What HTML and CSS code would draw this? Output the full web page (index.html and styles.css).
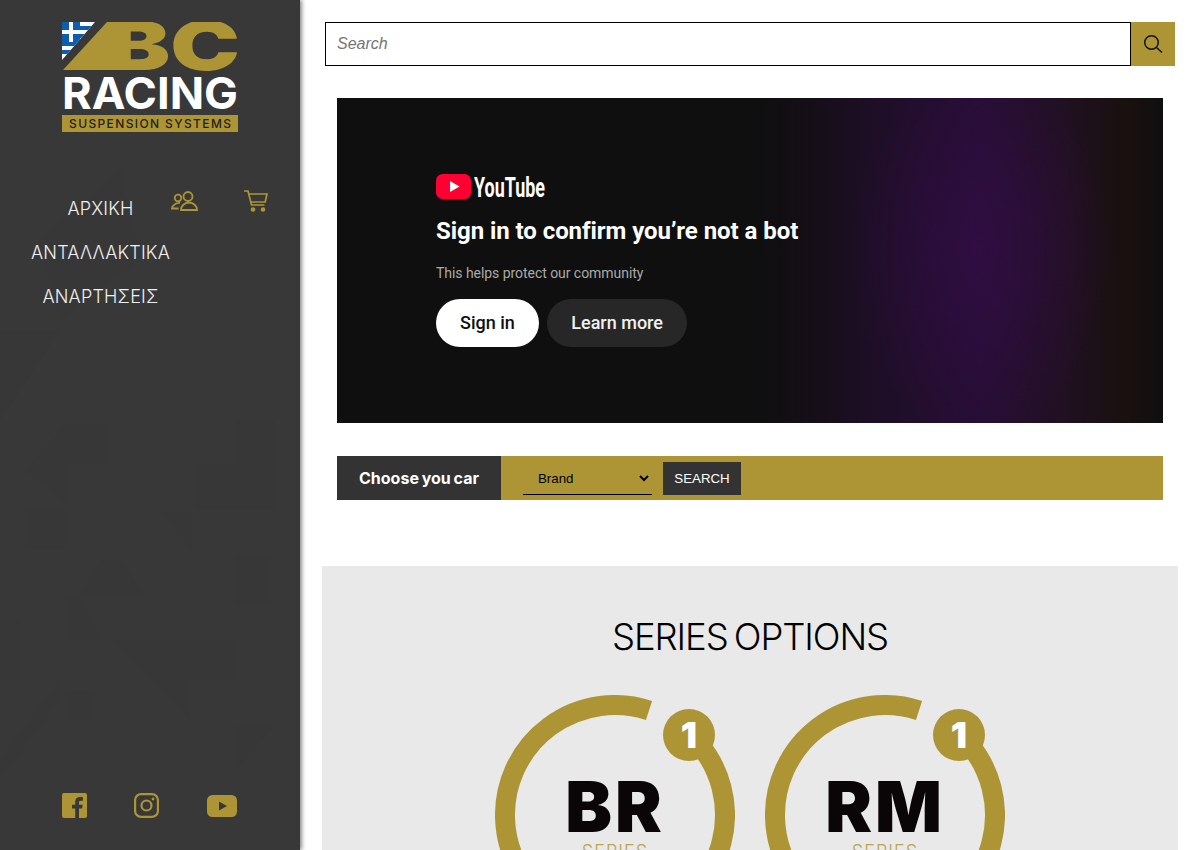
FILE: index.html
```html
<!DOCTYPE html>
<html lang="en">
<head>
  <meta charset="UTF-8">
  <title>BC Racing Greece</title>
  <link rel="stylesheet" href="styles.css">
</head>
<body>
  <aside class="sidebar">
    <svg class="sidebar-pattern" width="300" height="850" viewBox="0 0 300 850">
      <g class="tri">
        <polygon points="0,330 60,330 30,375 0,420"/>
        <polygon points="25,470 65,425 65,505"/>
        <polygon points="65,425 110,425 110,465 65,465"/>
        <polygon points="25,510 65,510 65,550 25,550"/>
        <polygon points="195,465 235,465 235,420 275,420 275,510 195,510"/>
        <polygon points="160,512 192,512 192,550"/>
        <polygon points="100,560 120,560 145,595 80,595"/>
        <polygon points="65,595 80,595 100,640 65,640"/>
        <polygon points="110,640 190,640 190,720"/>
        <polygon points="190,640 235,640 235,680 190,680"/>
        <polygon points="0,620 20,620 20,680 0,680"/>
        <polygon points="0,760 60,680 60,700 0,780"/>
        <polygon points="65,690 95,690 95,720 65,720"/>
        <polygon points="235,555 270,555 270,605 235,605"/>
        <polygon points="235,725 275,725 235,770"/>
        <polygon points="40,240 120,170 140,260 60,320"/>
      </g>
    </svg>

    <svg class="logo" width="176" height="110" viewBox="0 0 176 110">
      <defs>
        <clipPath id="flagClip"><polygon points="0,0 33,0 0,38"/></clipPath>
      </defs>
      <g clip-path="url(#flagClip)">
        <rect width="36" height="40" fill="#fff"/>
        <rect width="36" height="4" y="4" fill="#0d5eaf"/>
        <rect width="36" height="4" y="12" fill="#0d5eaf"/>
        <rect width="36" height="4" y="20" fill="#0d5eaf"/>
        <rect width="36" height="4" y="28" fill="#0d5eaf"/>
        <rect width="18" height="20" fill="#0d5eaf"/>
        <rect x="7" width="4" height="20" fill="#fff"/>
        <rect y="8" width="18" height="4" fill="#fff"/>
      </g>
      <polygon points="45,0 62,0 62,48 1,48" fill="#ad9535"/>
      <text class="logo-bc" x="46" y="48" textLength="132" lengthAdjust="spacingAndGlyphs">BC</text>
      <text class="logo-racing" x="0" y="87" textLength="176" lengthAdjust="spacingAndGlyphs">RACING</text>
      <rect y="93" width="176" height="17" fill="#ad9535"/>
      <text class="logo-sub" x="7" y="106" textLength="162">SUSPENSION SYSTEMS</text>
    </svg>

    <div class="side-menu">
      <ul class="nav">
        <li>ΑΡΧΙΚΗ</li>
        <li>ΑΝΤΑΛΛΑΚΤΙΚΑ</li>
        <li>ΑΝΑΡΤΗΣΕΙΣ</li>
      </ul>
      <div class="nav-icons">
        <svg width="27" height="22" viewBox="0 0 27 22" fill="none" stroke="#ad9535" stroke-width="1.8">
          <circle cx="7" cy="8" r="3.3"/>
          <circle cx="17" cy="6.5" r="4.5"/>
          <path d="M10 20h16c0-4-3.500-7.500-8-7.500s-8 3.500-8 7.500z"/>
          <path d="M9 13c-3.500-.3-7.500 2-8 5.500h6.500"/>
        </svg>
        <svg width="24" height="22" viewBox="0 0 24 22" fill="none" stroke="#ad9535" stroke-width="1.7">
          <path d="M0 1h4l3.500 14h13"/>
          <path d="M4.500 4h18.500l-1.800 8H6.500"/>
          <circle cx="9" cy="19.500" r="1.500" fill="#ad9535"/>
          <circle cx="19" cy="19.500" r="1.500" fill="#ad9535"/>
        </svg>
      </div>
    </div>

    <div class="social">
      <svg width="25" height="25" viewBox="0 0 25 25">
        <path fill="#ad9535" d="M2 0h21a2 2 0 0 1 2 2v21a2 2 0 0 1-2 2h-6v-9.500h3.200l.5-3.800H17V9.500c0-1.100.4-1.800 1.900-1.800h2V4.300c-.4 0-1.500-.2-2.800-.2-2.900 0-4.900 1.800-4.900 5v2.600H10v3.800h3.200V25H2a2 2 0 0 1-2-2V2a2 2 0 0 1 2-2z"/>
      </svg>
      <svg width="25" height="25" viewBox="0 0 25 25" fill="none" stroke="#ad9535" stroke-width="2.200">
        <rect x="1.100" y="1.100" width="22.800" height="22.800" rx="6"/>
        <circle cx="12.500" cy="12.500" r="5"/>
        <circle cx="19" cy="6" r="1.400" fill="#ad9535" stroke="none"/>
      </svg>
      <svg width="30" height="22" viewBox="0 0 30 22">
        <rect width="30" height="22" rx="5.500" fill="#ad9535"/>
        <polygon points="12,6.500 20,11 12,15.500" fill="#383838"/>
      </svg>
    </div>
  </aside>

  <main class="content">
    <form class="search-row">
      <input class="search-input" type="text" placeholder="Search">
      <button class="search-btn" type="button" aria-label="Search">
        <svg width="20" height="20" viewBox="0 0 20 20" fill="none" stroke="#111" stroke-width="1.500">
          <circle cx="8.500" cy="8.500" r="6.800"/>
          <path d="M13.500 13.500l5.500 5"/>
        </svg>
      </button>
    </form>

    <section class="video">
      <div class="yt-logo">
        <svg width="35" height="25" viewBox="0 0 35 25">
          <rect width="35" height="25" rx="6.500" fill="#ff0033"/>
          <polygon points="14,7 23.500,12.500 14,18" fill="#fff"/>
        </svg>
        <svg width="72" height="27" viewBox="0 0 72 27">
          <text class="yt-word" x="0" y="24" textLength="71" lengthAdjust="spacingAndGlyphs">YouTube</text>
        </svg>
      </div>
      <h2>Sign in to confirm you’re not a bot</h2>
      <p>This helps protect our community</p>
      <div class="yt-buttons">
        <span class="yt-btn yt-btn-light">Sign in</span>
        <span class="yt-btn yt-btn-dark">Learn more</span>
      </div>
    </section>

    <form class="car-bar">
      <div class="car-label">Choose you car</div>
      <select class="car-select">
        <option>Brand</option>
      </select>
      <button class="car-search" type="button">SEARCH</button>
    </form>

    <section class="series">
      <h2>SERIES OPTIONS</h2>
      <div class="series-list">
        <div class="badge">
          <svg width="240" height="240" viewBox="0 0 240 240">
            <path d="M154 15.400A110 110 0 1 0 204 49" fill="none" stroke="#ad9535" stroke-width="20"/>
            <circle cx="194" cy="40" r="26" fill="#ad9535"/>
            <text class="badge-num" x="194" y="53" text-anchor="middle">1</text>
            <text class="badge-name" x="120" y="137" text-anchor="middle">BR</text>
            <text class="badge-sub" x="120" y="163" text-anchor="middle">SERIES</text>
          </svg>
        </div>
        <div class="badge">
          <svg width="240" height="240" viewBox="0 0 240 240">
            <path d="M154 15.400A110 110 0 1 0 204 49" fill="none" stroke="#ad9535" stroke-width="20"/>
            <circle cx="194" cy="40" r="26" fill="#ad9535"/>
            <text class="badge-num" x="194" y="53" text-anchor="middle">1</text>
            <text class="badge-name" x="120" y="137" text-anchor="middle">RM</text>
            <text class="badge-sub" x="120" y="163" text-anchor="middle">SERIES</text>
          </svg>
        </div>
      </div>
    </section>
  </main>
</body>
</html>
```

FILE: styles.css
```css
html, body {
  height: 850px;
  overflow: hidden;
}
body {
  margin: 0;
  display: flex;
  background: #fff;
  font-family: "Liberation Sans", Arial, sans-serif;
}

/* sidebar */
.sidebar {
  position: relative;
  box-sizing: border-box;
  flex: 0 0 300px;
  height: 850px;
  display: flex;
  flex-direction: column;
  background: #383838;
  box-shadow: 2px 0 4px rgba(0,0,0,0.45);
  z-index: 2;
}
.sidebar-pattern {
  position: absolute;
  top: 0;
  left: 0;
}
.tri polygon {
  fill: #303030;
  opacity: 0.16;
}
.logo {
  position: relative;
  margin: 22px 0 0 62px;
}
.logo-bc {
  font-family: Inter, sans-serif;
  font-weight: 900;
  font-size: 68px;
  fill: #ad9535;
}
.logo-racing {
  font-family: Inter, sans-serif;
  font-weight: 700;
  font-size: 44px;
  fill: #fff;
}
.logo-sub {
  font-family: Inter, sans-serif;
  font-weight: 500;
  font-size: 12px;
  fill: #222;
}
.side-menu {
  position: relative;
  display: flex;
  align-items: flex-start;
  margin: 55px 0 0 31px;
}
.nav {
  list-style: none;
  margin: 0;
  padding: 0;
  width: 139px;
  color: #f0f0f0;
  font-family: Inter, sans-serif;
  font-weight: 300;
  font-size: 18px;
  letter-spacing: 0.2px;
  text-align: center;
  white-space: nowrap;
}
.nav li {
  height: 44px;
  line-height: 44px;
}
.nav-icons {
  display: flex;
  gap: 46px;
  margin: 3px 0 0 1px;
}
.social {
  position: relative;
  display: flex;
  align-items: center;
  gap: 47px;
  margin: auto 0 32px 62px;
}
.social svg:last-child {
  margin-left: 1px;
}

/* main column */
.content {
  flex: 0 0 856px;
  margin-left: 22px;
}
.search-row {
  display: flex;
  margin: 22px 3px 0;
  height: 44px;
}
.search-input {
  flex: 1;
  box-sizing: border-box;
  height: 44px;
  padding: 0 11px;
  border: 1px solid #000;
  font-family: "Liberation Sans", Arial, sans-serif;
  font-size: 16px;
  font-style: italic;
  outline: none;
}
.search-btn {
  width: 44px;
  height: 44px;
  padding: 0;
  border: none;
  background: #ad9535;
  display: flex;
  align-items: center;
  justify-content: center;
}

/* video placeholder */
.video {
  box-sizing: border-box;
  height: 325px;
  margin: 32px 15px 0;
  padding: 76px 0 0 99px;
  color: #fff;
  font-family: Roboto, sans-serif;
  background:
    radial-gradient(ellipse 130px 200px at 643px 150px, rgba(52,12,72,0.7) 0%, rgba(52,12,72,0) 100%),
    linear-gradient(90deg, #0f0f0f 0, #0f0f0f 420px, #140e16 470px, #1d0e25 530px, #260e34 643px, #201020 730px, #19100f 790px, #0f0f0f 826px);
}
.yt-logo {
  display: flex;
  align-items: center;
  gap: 3px;
  height: 25px;
}
.yt-word {
  font-family: Roboto, sans-serif;
  font-weight: 700;
  font-size: 27px;
  fill: #fff;
}
.video h2 {
  margin: 18px 0 0;
  font-size: 24px;
  line-height: 28px;
  font-weight: 700;
  letter-spacing: -0.06px;
}
.video p {
  margin: 18px 0 0;
  font-size: 14px;
  line-height: 20px;
  letter-spacing: -0.05px;
  color: #aaa;
}
.yt-buttons {
  display: flex;
  gap: 8px;
  margin-top: 16px;
}
.yt-btn {
  height: 48px;
  line-height: 48px;
  padding: 0 24px;
  border-radius: 24px;
  font-size: 18px;
  font-weight: 500;
}
.yt-btn-light {
  background: #fff;
  color: #0f0f0f;
}
.yt-btn-dark {
  background: #272727;
  color: #f1f1f1;
  padding: 0 24.500px;
}

/* car picker */
.car-bar {
  display: flex;
  align-items: flex-start;
  height: 44px;
  margin: 33px 15px 0;
  background: #ad9535;
}
.car-label {
  width: 164px;
  height: 44px;
  line-height: 44px;
  background: #333;
  color: #fff;
  font-family: Inter, sans-serif;
  font-weight: 700;
  font-size: 16px;
  word-spacing: -1px;
  text-align: center;
}
.car-select {
  box-sizing: border-box;
  width: 129px;
  height: 33px;
  margin: 6px 0 0 22px;
  padding: 0 11px;
  border: none;
  border-bottom: 1px solid #000;
  background: transparent;
  color: #000;
  font-family: "Liberation Sans", Arial, sans-serif;
  font-size: 13.3px;
  outline: none;
}
.car-search {
  width: 78px;
  height: 33px;
  margin: 6px 0 0 11px;
  padding: 0;
  border: none;
  background: #333;
  color: #fff;
  font-family: "Liberation Sans", Arial, sans-serif;
  font-size: 13.3px;
}

/* series */
.series {
  height: 400px;
  margin-top: 66px;
  padding-top: 50px;
  box-sizing: border-box;
  background: #e9e9e9;
}
.series h2 {
  margin: 0;
  font-family: Inter, sans-serif;
  font-weight: 300;
  font-size: 36.5px;
  line-height: 42px;
  letter-spacing: -1.1px;
  word-spacing: -3px;
  color: #000;
  text-align: center;
}
.series-list {
  display: flex;
  justify-content: center;
  gap: 30px;
  margin-top: 37px;
  margin-left: -1px;
}
.badge svg {
  display: block;
}
.badge-num {
  font-family: Inter, sans-serif;
  font-weight: 900;
  font-size: 36px;
  fill: #fff;
}
.badge-name {
  font-family: Inter, sans-serif;
  font-weight: 900;
  font-size: 70px;
  letter-spacing: 3px;
  fill: #0a0506;
}
.badge-sub {
  font-family: Inter, sans-serif;
  font-weight: 300;
  font-size: 18px;
  letter-spacing: 1px;
  fill: #b8a650;
}
```
